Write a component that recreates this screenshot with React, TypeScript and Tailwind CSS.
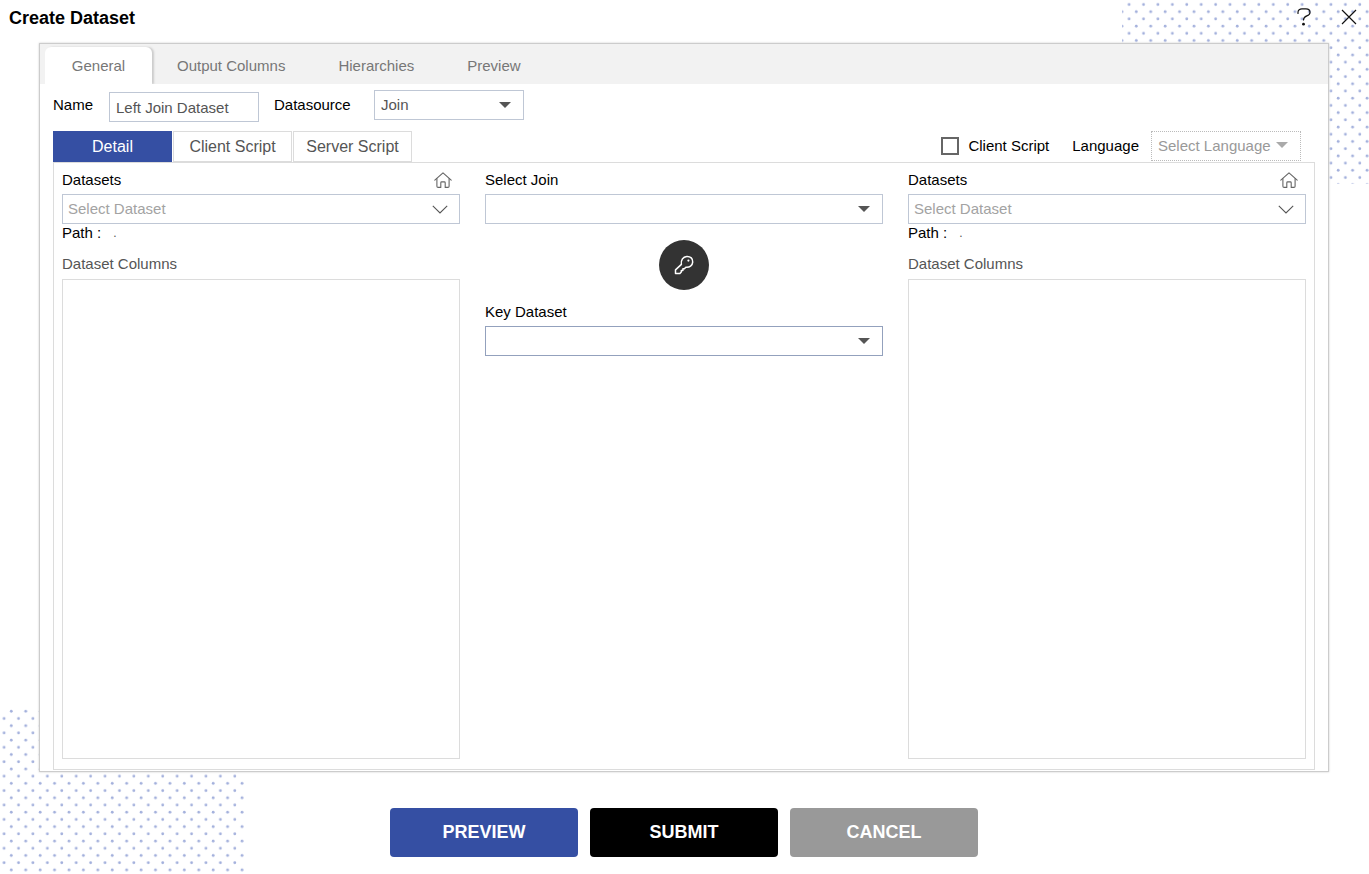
import React, { useState } from "react";

const inputText = "text-[15px] leading-5 text-[#555]";
const selectBox = "h-[30px] w-full appearance-none rounded-none border bg-white pl-[6px] pr-8 outline-none";

function DotField({ id, x, y, className }: { id: string; x: number; y: number; className: string }) {
  return (
    <svg className={className} aria-hidden="true">
      <defs>
        <pattern id={id} x={x} y={y} width="14.42" height="14.42" patternUnits="userSpaceOnUse">
          <circle cx="3.6" cy="3.6" r="1.4" fill="#a3b0dc" />
          <circle cx="10.81" cy="10.81" r="1.4" fill="#a3b0dc" />
        </pattern>
      </defs>
      <rect width="100%" height="100%" fill={`url(#${id})`} />
    </svg>
  );
}

function Caret({ className }: { className: string }) {
  return (
    <svg viewBox="0 0 12 6" width="12" height="6" className={className} aria-hidden="true">
      <path d="M0 0h12L6 6z" fill="currentColor" />
    </svg>
  );
}

function HomeIcon() {
  return (
    <svg viewBox="0 0 18 16" width="18" height="16" fill="none" stroke="#666" strokeWidth="1.1" strokeLinecap="round" strokeLinejoin="round" aria-hidden="true">
      <path d="M.8 8.2 9 .8l8.2 7.4" />
      <path d="M2.9 6.6v7.6c0 .8.4 1.2 1.2 1.2h2.7v-4.6c0-.6.3-.9.9-.9h2.6c.6 0 .9.3.9.9v4.6h2.7c.8 0 1.2-.4 1.2-1.2V6.6" />
    </svg>
  );
}

function KeyIcon() {
  return (
    <svg viewBox="0 0 20 20" width="20" height="20" fill="none" stroke="#fff" strokeWidth="1.5" strokeLinejoin="round" aria-hidden="true">
      <path d="M7.4 9.4C6.7 5.2 9 1.7 12.8 1.4c3.700-.2 6.200 2.200 5.900 5.700-.3 3.600-3.100 5.600-6.900 5.200l-1.400 1.500H8.900v1.700H7.300v1.600l-1.400 1.500H1.500v-3.700z" />
      <circle cx="14.4" cy="5.6" r="1.1" fill="#fff" stroke="none" />
    </svg>
  );
}

function DatasetColumn({ side }: { side: string }) {
  return (
    <section className="min-w-0">
      <div className="flex h-[31px] items-center justify-between pr-2 pt-[3px]">
        <label htmlFor={`dataset-${side}`}>Datasets</label>
        <button type="button" aria-label="Home folder">
          <HomeIcon />
        </button>
      </div>
      <div className="flex h-[30px] items-center border border-[#bfc7d5] bg-white pl-[5px] pr-[11px]">
        <input
          id={`dataset-${side}`}
          placeholder="Select Dataset"
          className={`${inputText} min-w-0 flex-1 bg-transparent outline-none placeholder:text-[#a3a3a3]`}
        />
        <button type="button" aria-label="Open dataset list">
          <svg viewBox="0 0 16 9" width="16" height="9" fill="none" stroke="#555" strokeWidth="1.1" aria-hidden="true">
            <path d="m.8.8 7.2 7.2L15.2.8" />
          </svg>
        </button>
      </div>
      <p className="flex h-[18px] items-center gap-3">
        Path : <span className="text-xs leading-[22px] text-[#555]">.</span>
      </p>
      <h2 id={`columns-${side}`} className="mt-3 h-[25px] leading-5 text-[#555]">
        Dataset Columns
      </h2>
      <div role="listbox" aria-labelledby={`columns-${side}`} className="h-[480px] border border-[#dcdcdc] bg-white" />
    </section>
  );
}

const pageTabs = ["Output Columns", "Hierarchies", "Preview"];

export default function App() {
  const [name, setName] = useState("Left Join Dataset");
  return (
    <main className="relative min-h-screen overflow-hidden bg-white font-['Liberation_Sans',Arial,sans-serif] text-[15px] leading-5 text-black">
      <DotField id="dots-top" x={3.5} y={0.9} className="absolute right-0 top-0 h-[184px] w-[247px]" />
      <DotField id="dots-bottom" x={0.5} y={5.9} className="absolute bottom-0 left-0 h-[165px] w-[245px]" />

      <div className="relative">
        <header className="flex h-9 items-center justify-between pl-[9px] pr-3">
          <h1 className="text-lg font-bold">Create Dataset</h1>
          <div className="flex items-center gap-[30px] pb-[2px]">
            <button type="button" aria-label="Help">
              <svg viewBox="0 0 14 18" width="14" height="18" fill="none" stroke="#111" strokeWidth="1.2" strokeLinecap="round" aria-hidden="true">
                <path d="M1 5.5V4.2C1 2 2.8.9 5 .9h4c2.2 0 4 1.3 4 3.500 0 1.800-1.200 2.700-3.200 3.500C7.500 8.800 6.500 9.600 6.500 12" />
                <circle cx="6.5" cy="16.2" r="1.4" fill="#111" stroke="none" />
              </svg>
            </button>
            <button type="button" aria-label="Close">
              <svg viewBox="0 0 16 16" width="16" height="16" fill="none" stroke="#111" strokeWidth="1.2" aria-hidden="true">
                <path d="m1 1 14 14M15 1 1 15" />
              </svg>
            </button>
          </div>
        </header>

        <div className="ml-[39px] mr-10 mt-[7px] border border-[#ccc] bg-white shadow-[0_0_2px_#ccc]">
          <nav className="flex h-10 items-end bg-[#f2f2f2] pl-[5px] text-[#777]">
            <button type="button" className="h-[37px] w-[107px] rounded-t-md bg-white shadow-[2px_0_2px_#ccc] [clip-path:inset(-2px_-6px_0_0)]">
              General
            </button>
            <div className="flex h-[37px] gap-[53px] pl-[25px]">
              {pageTabs.map((tab) => (
                <button key={tab} type="button">
                  {tab}
                </button>
              ))}
            </div>
          </nav>

          <div className="px-[13px] pb-px">
            <div className="flex h-[47px] items-start pt-[6px]">
              <label htmlFor="name" className="w-14 leading-[30px]">Name</label>
              <input
                id="name"
                value={name}
                onChange={(e) => setName(e.target.value)}
                className={`${inputText} mt-[2px] h-[30px] w-[150px] border border-[#bfc7d5] bg-white px-[6px] outline-none`}
              />
              <label htmlFor="source" className="ml-[15px] w-[100px] leading-[30px]">Datasource</label>
              <div className="relative w-[150px]">
                <select id="source" className={`${selectBox} ${inputText} border-[#bfc7d5]`}>
                  <option>Join</option>
                </select>
                <Caret className="pointer-events-none absolute right-[13px] top-3 text-[#555]" />
              </div>
            </div>

            <div className="flex h-[31px] items-start justify-between">
              <div className="flex gap-px text-base text-[#555]">
                <button type="button" className="h-[31px] w-[119px] bg-[#354fa3] text-white">Detail</button>
                <button type="button" className="h-[31px] w-[119px] border border-[#dcdcdc] bg-white">Client Script</button>
                <button type="button" className="h-[31px] w-[119px] border border-[#dcdcdc] bg-white">Server Script</button>
              </div>
              <div className="flex h-[30px] items-center pr-[14px]">
                <label className="flex items-center gap-[9px]">
                  <input type="checkbox" className="size-[18px] appearance-none border-2 border-[#666] bg-white checked:bg-[#354fa3]" />
                  Client Script
                </label>
                <label htmlFor="language" className="ml-[23px] mr-3">Language</label>
                <div className="relative w-[150px]">
                  <select id="language" disabled className="h-[30px] w-full appearance-none border border-dotted border-[#bbb] bg-white pl-[6px] text-[#999] opacity-100">
                    <option>Select Language</option>
                  </select>
                  <Caret className="pointer-events-none absolute right-[13px] top-[11px] text-[#aaa]" />
                </div>
              </div>
            </div>

            <div className="grid grid-cols-3 gap-[25px] border border-[#dcdcdc] bg-white px-2 pb-[10px]">
              <DatasetColumn side="left" />
              <section className="min-w-0">
                <label htmlFor="join" className="flex h-[31px] items-center pt-[3px]">Select Join</label>
                <div className="relative">
                  <select id="join" defaultValue="" className={`${selectBox} ${inputText} border-[#bfc7d5]`}>
                    <option value="" />
                  </select>
                  <Caret className="pointer-events-none absolute right-[13px] top-3 text-[#555]" />
                </div>
                <button type="button" aria-label="Set join key" className="mx-auto mt-4 flex size-[50px] items-center justify-center rounded-full bg-[#333]">
                  <KeyIcon />
                </button>
                <label htmlFor="key" className="mt-[5px] flex h-[31px] items-center pt-[3px]">Key Dataset</label>
                <div className="relative">
                  <select id="key" defaultValue="" className={`${selectBox} ${inputText} border-[#93a1bd]`}>
                    <option value="" />
                  </select>
                  <Caret className="pointer-events-none absolute right-[13px] top-3 text-[#555]" />
                </div>
              </section>
              <DatasetColumn side="right" />
            </div>
          </div>
        </div>

        <footer className="ml-[39px] mr-10 mt-9 flex justify-center gap-3 pb-[17px] text-lg font-bold text-white">
          <button type="button" className="h-[49px] w-[188px] rounded bg-[#354fa3] pb-[2px]">PREVIEW</button>
          <button type="button" className="h-[49px] w-[188px] rounded bg-black pb-[2px]">SUBMIT</button>
          <button type="button" className="h-[49px] w-[188px] rounded bg-[#999] pb-[2px]">CANCEL</button>
        </footer>
      </div>
    </main>
  );
}
